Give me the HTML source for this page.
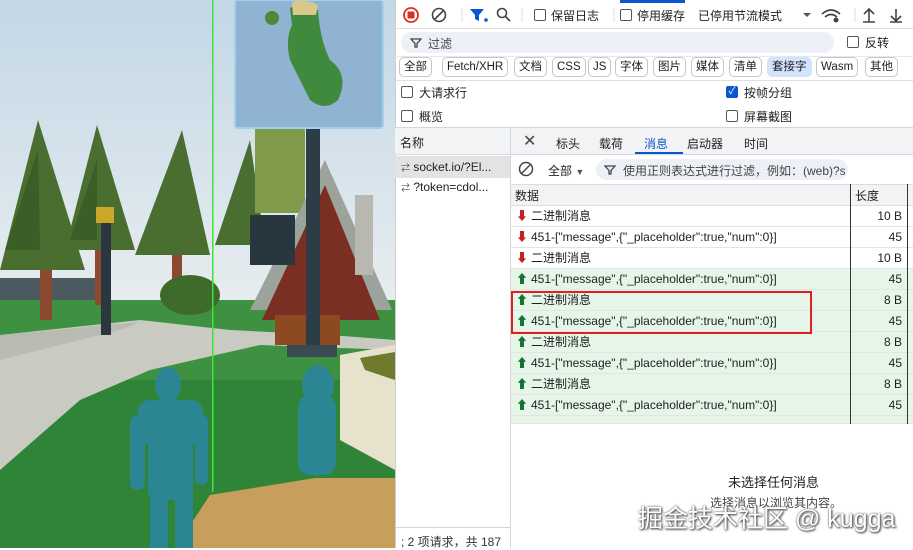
<!DOCTYPE html>
<html><head><meta charset="utf-8"><style>
*{box-sizing:border-box;margin:0;padding:0}
body{width:913px;height:548px;overflow:hidden;position:relative;font-family:"Liberation Sans","Noto Sans CJK SC",sans-serif;font-size:12px;color:#1f1f1f;background:#fff}
.a{position:absolute}
.cb{position:absolute;width:12px;height:12px;border:1px solid #555;border-radius:2px;background:#fff}
.btn{position:absolute;top:57px;height:20px;border:1px solid #c4c7c5;border-radius:5px;font-size:11.5px;line-height:18px;padding:0 4px;background:#fff}
.row{position:absolute;left:511px;width:402px;height:21px;border-bottom:1px solid #e4e4e4;font-size:12px;line-height:21px}
.row .t{position:absolute;left:20px}
.row .n{position:absolute;right:10px;width:60px;text-align:right;right:11px}
.up{background:#e5f5e7}
.ar{position:absolute;left:5px;top:0;font-weight:bold;font-size:12px}
</style></head><body>
<svg class="a" style="left:0;top:0" width="395" height="548">
<defs><linearGradient id="sky" x1="0" y1="0" x2="0" y2="1"><stop offset="0" stop-color="#c3d7e6"/><stop offset="1" stop-color="#e9eef0"/></linearGradient></defs>
<rect width="395" height="320" fill="url(#sky)"/>
<rect y="278" width="100" height="25" fill="#4d5960"/>
<rect y="300" width="395" height="248" fill="#3f9142"/>
<rect y="380" width="395" height="168" fill="#2f8437"/>
<path d="M0 335 L140 320 L230 330 L330 335 L395 340 L395 350 L260 345 L150 370 L80 400 L0 470 Z" fill="#c9cbc2"/>
<path d="M0 335 L140 322 L120 330 L0 360Z" fill="#b8bbb2"/>
<g fill="#4a6e2f"><polygon points="38,120 0,270 85,270"/><polygon points="97,125 65,250 135,250"/><polygon points="182,130 135,255 210,255"/><polygon points="250,140 215,245 265,245"/></g>
<g fill="#3b5d26"><polygon points="38,150 5,250 40,250"/><polygon points="97,160 70,240 97,240"/></g>
<rect x="40" y="270" width="12" height="50" fill="#8b4a2f"/><rect x="95" y="250" width="10" height="55" fill="#8b4a2f"/><rect x="172" y="255" width="10" height="30" fill="#8b4a2f"/>
<rect x="255" y="128" width="50" height="85" fill="#7f9a48"/>
<polygon points="325,160 250,310 392,310" fill="#9ca39a"/>
<polygon points="325,185 262,320 380,320" fill="#7a2f22"/>
<rect x="355" y="195" width="18" height="80" fill="#b8b8b0"/>
<rect x="250" y="215" width="45" height="50" fill="#27363f"/>
<ellipse cx="190" cy="295" rx="30" ry="20" fill="#3f6b2a"/>
<rect x="275" y="315" width="65" height="30" fill="#8d4a22"/>
<rect x="101" y="215" width="10" height="120" fill="#2b3640"/><rect x="96" y="207" width="18" height="16" fill="#c9a82a"/>
<rect x="306" y="128" width="14" height="225" fill="#2d3d48"/><rect x="287" y="345" width="50" height="12" fill="#3b4a52"/>
<path d="M340 355 L395 345 L395 470 L340 440Z" fill="#e7e2cc"/><path d="M360 358 L395 352 L395 380 L365 370Z" fill="#6f7a2c"/>
<path d="M175 548 L210 495 L315 478 L395 478 L395 548Z" fill="#c89e5c"/>
<g fill="#2c8592"><ellipse cx="168" cy="385" rx="13" ry="18"/><rect x="138" y="400" width="65" height="45" rx="12"/><rect x="148" y="440" width="45" height="60" rx="8"/><rect x="130" y="415" width="15" height="75" rx="7"/><rect x="195" y="415" width="13" height="70" rx="6"/><rect x="150" y="495" width="18" height="53"/><rect x="175" y="495" width="18" height="53"/>
<ellipse cx="318" cy="385" rx="16" ry="20"/><rect x="298" y="395" width="38" height="80" rx="12"/></g>
<rect x="212" y="0" width="1.5" height="492" fill="#39e639"/>
<rect x="235" y="0" width="148" height="128" rx="3" fill="#8fb3d0" stroke="#9fd0ef" stroke-width="2"/>
<path d="M290 8 Q305 0 318 10 Q320 40 330 60 Q350 75 338 100 Q325 112 310 100 Q300 80 290 60 Q285 40 292 25Z" fill="#3f8a3c"/>
<path d="M292 2 Q305 -2 318 5 L316 15 L293 15Z" fill="#d8c988"/>
<circle cx="272" cy="18" r="7" fill="#4c8a3a"/>
</svg>
<!-- devtools -->
<div class="a" style="left:395px;top:0;width:518px;height:548px;background:#fff;border-left:1px solid #ccc"></div>
<div class="a" style="left:620px;top:0;width:65px;height:3px;background:#0b57d0"></div>
<div class="a" style="left:395px;top:28px;width:518px;height:1px;background:#e0e0e0"></div>
<svg class="a" style="left:400px;top:5px" width="510" height="20">
<circle cx="11" cy="10" r="7" fill="none" stroke="#d93025" stroke-width="1.8"/><rect x="7.5" y="6.5" width="7" height="7" rx="1" fill="#d93025"/>
<circle cx="39" cy="10" r="6.5" fill="none" stroke="#444" stroke-width="1.6"/><line x1="34.5" y1="14.5" x2="43.5" y2="5.5" stroke="#444" stroke-width="1.6"/>
<line x1="62" y1="3" x2="62" y2="17" stroke="#ddd"/>
<path d="M70 4 L84 4 L79 10 L79 16 L75 14 L75 10Z" fill="#0b57d0"/><circle cx="86" cy="15" r="1.8" fill="#0b57d0"/>
<circle cx="102" cy="8" r="4.5" fill="none" stroke="#444" stroke-width="1.6"/><line x1="105" y1="11" x2="110" y2="16" stroke="#444" stroke-width="1.8"/>
<line x1="122" y1="3" x2="122" y2="17" stroke="#ddd"/><line x1="214" y1="3" x2="214" y2="17" stroke="#ddd"/>
<path d="M403 8 L411 8 L407 12Z" fill="#555"/>
<path d="M422 9 Q431 1 440 9 M425 12 Q431 7 437 12" stroke="#444" stroke-width="1.6" fill="none"/><circle cx="436" cy="15" r="2.5" fill="#444"/>
<line x1="455" y1="3" x2="455" y2="17" stroke="#ddd"/>
<path d="M469 17 L469 5 M464 9 L469 4 L474 9 M463 17 L475 17" stroke="#444" stroke-width="1.6" fill="none"/>
<path d="M496 4 L496 15 M491 11 L496 16 L501 11 M490 17 L502 17" stroke="#444" stroke-width="1.6" fill="none"/>
</svg>
<div class="cb" style="left:534px;top:9px"></div><div class="a" style="left:551px;top:7px;font-size:12px">保留日志</div>
<div class="cb" style="left:620px;top:9px"></div><div class="a" style="left:637px;top:7px">停用缓存</div>
<div class="a" style="left:698px;top:7px">已停用节流模式</div>
<div class="a" style="left:401px;top:32px;width:433px;height:21px;border-radius:11px;background:#edf1f7"></div>
<svg class="a" style="left:410px;top:37px" width="12" height="12"><path d="M1 2 L11 2 L7 6.5 L7 10 L5 10 L5 6.5Z" fill="none" stroke="#444" stroke-width="1.3"/></svg>
<div class="a" style="left:428px;top:35px;color:#444">过滤</div>
<div class="cb" style="left:847px;top:36px"></div><div class="a" style="left:865px;top:34px">反转</div>
<div class="a" style="left:395px;top:56px;width:518px;height:1px;background:#e8e8e8"></div>
<div class="btn" style="left:399px">全部</div>
<div class="btn" style="left:442px">Fetch/XHR</div>
<div class="btn" style="left:514px">文档</div>
<div class="btn" style="left:552px">CSS</div>
<div class="btn" style="left:588px">JS</div>
<div class="btn" style="left:615px">字体</div>
<div class="btn" style="left:653px">图片</div>
<div class="btn" style="left:691px">媒体</div>
<div class="btn" style="left:729px">清单</div>
<div class="btn" style="left:767px;background:#d3e3fd;border-color:#d3e3fd">套接字</div>
<div class="btn" style="left:816px">Wasm</div>
<div class="btn" style="left:865px">其他</div>
<div class="a" style="left:395px;top:80px;width:518px;height:1px;background:#e0e0e0"></div>
<div class="cb" style="left:401px;top:86px"></div><div class="a" style="left:419px;top:84px">大请求行</div>
<div class="cb" style="left:401px;top:110px"></div><div class="a" style="left:419px;top:108px">概览</div>
<div class="cb" style="left:726px;top:86px;background:#0b57d0;border-color:#0b57d0;color:#fff;font-size:10px;line-height:10px;text-align:center">✓</div><div class="a" style="left:744px;top:84px">按帧分组</div>
<div class="cb" style="left:726px;top:110px"></div><div class="a" style="left:744px;top:108px">屏幕截图</div>
<div class="a" style="left:395px;top:127px;width:518px;height:1px;background:#d0d7e2"></div>
<!-- name panel -->
<div class="a" style="left:395px;top:128px;width:115px;height:27px;background:#f1f3f4;border-bottom:1px solid #ddd"></div>
<div class="a" style="left:400px;top:134px">名称</div>
<div class="a" style="left:395px;top:156px;width:115px;height:22px;background:#e3e3e3"></div>
<div class="a" style="left:401px;top:160px;font-size:12px"><span style="font-size:9px;color:#555">⇄</span> socket.io/?El...</div>
<div class="a" style="left:401px;top:180px;font-size:12px"><span style="font-size:9px;color:#555">⇄</span> ?token=cdol...</div>
<div class="a" style="left:510px;top:128px;width:1px;height:420px;background:#d0d7e2"></div>
<div class="a" style="left:395px;top:527px;width:115px;height:1px;background:#d0d7e2"></div>
<div class="a" style="left:401px;top:533px;font-size:12px;color:#333">; 2 项请求，共 187</div>
<!-- tabs -->
<div class="a" style="left:511px;top:128px;width:402px;height:27px;background:#f1f3f4;border-bottom:1px solid #d0d7e2"></div>
<div class="a" style="left:523px;top:131px;font-size:16px;color:#444">✕</div>
<div class="a" style="left:556px;top:135px">标头</div>
<div class="a" style="left:599px;top:135px">载荷</div>
<div class="a" style="left:644px;top:135px;color:#0b57d0">消息</div>
<div class="a" style="left:635px;top:152px;width:48px;height:2px;background:#0b57d0"></div>
<div class="a" style="left:687px;top:135px">启动器</div>
<div class="a" style="left:744px;top:135px">时间</div>
<svg class="a" style="left:518px;top:161px" width="16" height="16"><circle cx="8" cy="8" r="6.5" fill="none" stroke="#444" stroke-width="1.5"/><line x1="3.5" y1="12.5" x2="12.5" y2="3.5" stroke="#444" stroke-width="1.5"/></svg>
<div class="a" style="left:548px;top:162px">全部 <span style="font-size:9px;color:#555">▼</span></div>
<div class="a" style="left:596px;top:159px;width:252px;height:21px;border-radius:11px;background:#edf1f7"></div>
<svg class="a" style="left:604px;top:164px" width="12" height="12"><path d="M1 2 L11 2 L7 6.5 L7 10 L5 10 L5 6.5Z" fill="none" stroke="#444" stroke-width="1.3"/></svg>
<div class="a" style="left:623px;top:162px;font-size:12px;color:#444;width:222px;overflow:hidden;white-space:nowrap">使用正则表达式进行过滤，例如：(web)?s</div>
<div class="a" style="left:511px;top:184px;width:402px;height:22px;background:#f1f3f4;border-bottom:1px solid #ddd;border-top:1px solid #ddd"></div>
<div class="a" style="left:515px;top:187px">数据</div>
<div class="a" style="left:855px;top:187px">长度</div>
<div class="row" style="top:206px"><span class="ar" style="color:#c5221f">⬇</span><span class="t">二进制消息</span><span class="n">10 B</span></div>
<div class="row" style="top:227px"><span class="ar" style="color:#c5221f">⬇</span><span class="t">451-["message",{"_placeholder":true,"num":0}]</span><span class="n">45</span></div>
<div class="row" style="top:248px"><span class="ar" style="color:#c5221f">⬇</span><span class="t">二进制消息</span><span class="n">10 B</span></div>
<div class="row up" style="top:269px"><span class="ar" style="color:#137333">⬆</span><span class="t">451-["message",{"_placeholder":true,"num":0}]</span><span class="n">45</span></div>
<div class="row up" style="top:290px"><span class="ar" style="color:#137333">⬆</span><span class="t">二进制消息</span><span class="n">8 B</span></div>
<div class="row up" style="top:311px"><span class="ar" style="color:#137333">⬆</span><span class="t">451-["message",{"_placeholder":true,"num":0}]</span><span class="n">45</span></div>
<div class="row up" style="top:332px"><span class="ar" style="color:#137333">⬆</span><span class="t">二进制消息</span><span class="n">8 B</span></div>
<div class="row up" style="top:353px"><span class="ar" style="color:#137333">⬆</span><span class="t">451-["message",{"_placeholder":true,"num":0}]</span><span class="n">45</span></div>
<div class="row up" style="top:374px"><span class="ar" style="color:#137333">⬆</span><span class="t">二进制消息</span><span class="n">8 B</span></div>
<div class="row up" style="top:395px"><span class="ar" style="color:#137333">⬆</span><span class="t">451-["message",{"_placeholder":true,"num":0}]</span><span class="n">45</span></div>
<div class="row up" style="top:416px;height:8px"></div>
<div class="a" style="left:850px;top:184px;width:1px;height:240px;background:#333"></div>
<div class="a" style="left:907px;top:184px;width:1px;height:240px;background:#333"></div>
<div class="a" style="left:511px;top:291px;width:301px;height:43px;border:2px solid #e02020"></div>
<div class="a" style="left:728px;top:472px;font-size:13px">未选择任何消息</div>
<div class="a" style="left:710px;top:494px;font-size:12px;color:#444">选择消息以浏览其内容。</div>
<div class="a" style="left:638px;top:499px;font-size:25px;color:#fff;text-shadow:0 0 2px #555,1px 1px 2px #333;white-space:nowrap">掘金技术社区 @ kugga</div>
</body></html>
